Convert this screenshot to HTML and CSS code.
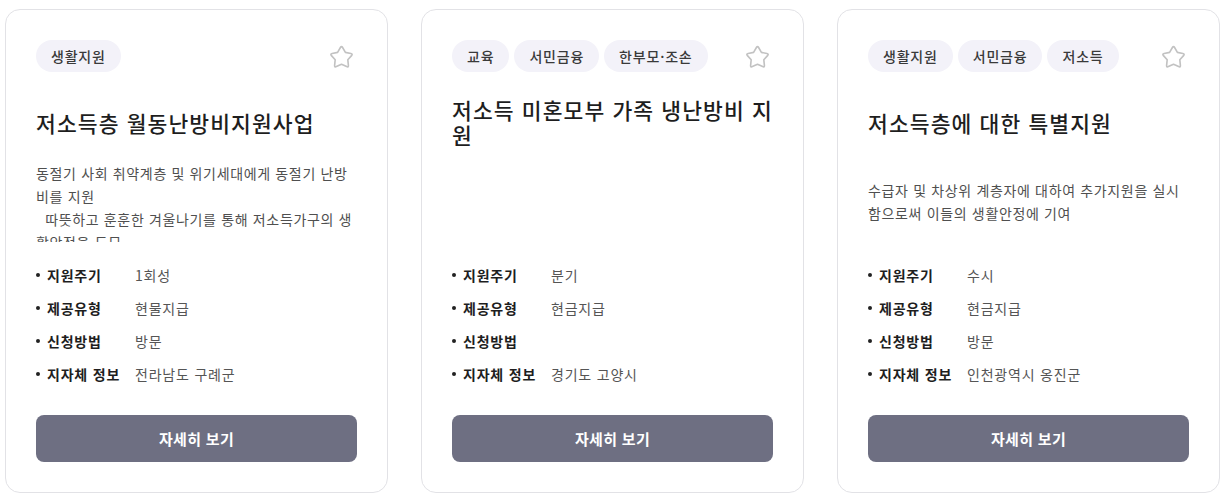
FILE: index.html
```html
<!DOCTYPE html>
<html lang="ko">
<head>
<meta charset="utf-8">
<title>지원 목록</title>
<link rel="stylesheet" href="styles.css">
</head>
<body>
<div class="grid">
  <article class="card">
    <div class="card-head">
      <div class="chips"><span class="chip">생활지원</span></div>
      <svg class="star" viewBox="0 0 24 24" aria-hidden="true"><path d="M11.10 4.55 Q12 3 12.90 4.55 L15.23 8.55 L19.75 9.53 Q21.51 9.91 20.31 11.25 L17.23 14.70 L17.70 19.30 Q17.88 21.09 16.23 20.36 L12 18.5 L7.77 20.36 Q6.12 21.09 6.30 19.30 L6.77 14.70 L3.69 11.25 Q2.49 9.91 4.25 9.53 L8.77 8.55 Z"/></svg>
    </div>
    <div class="title-box"><h2 class="title">저소득층 월동난방비지원사업</h2></div>
    <div class="desc-box"><p class="desc">동절기 사회 취약계층 및 위기세대에게 동절기 난방비를 지원
  따뜻하고 훈훈한 겨울나기를 통해 저소득가구의 생활안정을 도모</p></div>
    <ul class="info">
      <li><span class="dot"></span><span class="label">지원주기</span><span class="value">1회성</span></li>
      <li><span class="dot"></span><span class="label">제공유형</span><span class="value">현물지급</span></li>
      <li><span class="dot"></span><span class="label">신청방법</span><span class="value">방문</span></li>
      <li><span class="dot"></span><span class="label">지자체 정보</span><span class="value">전라남도 구례군</span></li>
    </ul>
    <button class="btn" type="button">자세히 보기</button>
  </article>

  <article class="card">
    <div class="card-head">
      <div class="chips"><span class="chip">교육</span><span class="chip">서민금융</span><span class="chip">한부모·조손</span></div>
      <svg class="star" viewBox="0 0 24 24" aria-hidden="true"><path d="M11.10 4.55 Q12 3 12.90 4.55 L15.23 8.55 L19.75 9.53 Q21.51 9.91 20.31 11.25 L17.23 14.70 L17.70 19.30 Q17.88 21.09 16.23 20.36 L12 18.5 L7.77 20.36 Q6.12 21.09 6.30 19.30 L6.77 14.70 L3.69 11.25 Q2.49 9.91 4.25 9.53 L8.77 8.55 Z"/></svg>
    </div>
    <div class="title-box"><h2 class="title">저소득 미혼모부 가족 냉난방비 지원</h2></div>
    <div class="desc-box"><p class="desc"></p></div>
    <ul class="info">
      <li><span class="dot"></span><span class="label">지원주기</span><span class="value">분기</span></li>
      <li><span class="dot"></span><span class="label">제공유형</span><span class="value">현금지급</span></li>
      <li><span class="dot"></span><span class="label">신청방법</span><span class="value"></span></li>
      <li><span class="dot"></span><span class="label">지자체 정보</span><span class="value">경기도 고양시</span></li>
    </ul>
    <button class="btn" type="button">자세히 보기</button>
  </article>

  <article class="card">
    <div class="card-head">
      <div class="chips"><span class="chip">생활지원</span><span class="chip">서민금융</span><span class="chip">저소득</span></div>
      <svg class="star" viewBox="0 0 24 24" aria-hidden="true"><path d="M11.10 4.55 Q12 3 12.90 4.55 L15.23 8.55 L19.75 9.53 Q21.51 9.91 20.31 11.25 L17.23 14.70 L17.70 19.30 Q17.88 21.09 16.23 20.36 L12 18.5 L7.77 20.36 Q6.12 21.09 6.30 19.30 L6.77 14.70 L3.69 11.25 Q2.49 9.91 4.25 9.53 L8.77 8.55 Z"/></svg>
    </div>
    <div class="title-box"><h2 class="title">저소득층에 대한 특별지원</h2></div>
    <div class="desc-box"><p class="desc">수급자 및 차상위 계층자에 대하여 추가지원을 실시함으로써 이들의 생활안정에 기여</p></div>
    <ul class="info">
      <li><span class="dot"></span><span class="label">지원주기</span><span class="value">수시</span></li>
      <li><span class="dot"></span><span class="label">제공유형</span><span class="value">현금지급</span></li>
      <li><span class="dot"></span><span class="label">신청방법</span><span class="value">방문</span></li>
      <li><span class="dot"></span><span class="label">지자체 정보</span><span class="value">인천광역시 옹진군</span></li>
    </ul>
    <button class="btn" type="button">자세히 보기</button>
  </article>
</div>
</body>
</html>
```
FILE: styles.css
```css
* { box-sizing: border-box; }

html, body {
  margin: 0;
  background: #ffffff;
}

body {
  padding: 9px 10px 0 5px;
  font-family: "Noto Sans CJK KR", "Noto Sans", sans-serif;
  color: #222;
}

.grid {
  display: grid;
  grid-template-columns: repeat(3, 383px);
  column-gap: 33px;
}

.card {
  height: 484px;
  border: 1px solid #e2e2e6;
  border-radius: 15px;
  padding: 30px 30px 30px 30px;
  display: flex;
  flex-direction: column;
  background: #fff;
}

.card-head {
  height: 32px;
  display: flex;
  align-items: center;
  justify-content: space-between;
}

.chips {
  display: flex;
  gap: 5px;
}

.chip {
  height: 32px;
  padding: 0 15px;
  border-radius: 16px;
  background: #f3f2f9;
  color: #3a3a3a;
  font-size: 14px;
  font-weight: 500;
  line-height: 32px;
  letter-spacing: 0.8px;
  white-space: nowrap;
}

.star {
  width: 29px;
  height: 29px;
  margin-right: 1px;
  fill: none;
  stroke: #c2c2c2;
  stroke-width: 1.35;
  stroke-linejoin: round;
}

.title-box {
  margin-top: 25px;
  height: 50px;
  display: flex;
  flex-direction: column;
}

.title {
  margin: auto 0;
  font-size: 21.5px;
  font-weight: 500;
  line-height: 25px;
  color: #1e1e1e;
  letter-spacing: 1.1px;
}

.desc-box {
  margin-top: 15px;
  height: 80px;
  overflow: hidden;
  display: flex;
  flex-direction: column;
}

.desc {
  margin: auto 0;
  font-size: 14px;
  line-height: 23px;
  color: #4f4f4f;
  letter-spacing: 0.65px;
  white-space: pre-wrap;
}

.info {
  list-style: none;
  margin: 16px 0 0 0;
  padding: 0;
}

.info li {
  height: 33px;
  display: flex;
  align-items: center;
  font-size: 14px;
  letter-spacing: 0.8px;
}

.dot {
  width: 4px;
  height: 4px;
  border-radius: 50%;
  background: #222;
  margin-right: 7px;
  flex: none;
}

.label {
  width: 88px;
  flex: none;
  font-weight: 700;
  color: #1e1e1e;
}

.value {
  color: #555;
}

.btn {
  margin-top: 25px;
  height: 47px;
  width: 100%;
  border: 0;
  border-radius: 8px;
  background: #6e6f82;
  color: #fff;
  font-family: inherit;
  font-size: 15px;
  font-weight: 700;
  letter-spacing: 0.3px;
  cursor: pointer;
}
```
